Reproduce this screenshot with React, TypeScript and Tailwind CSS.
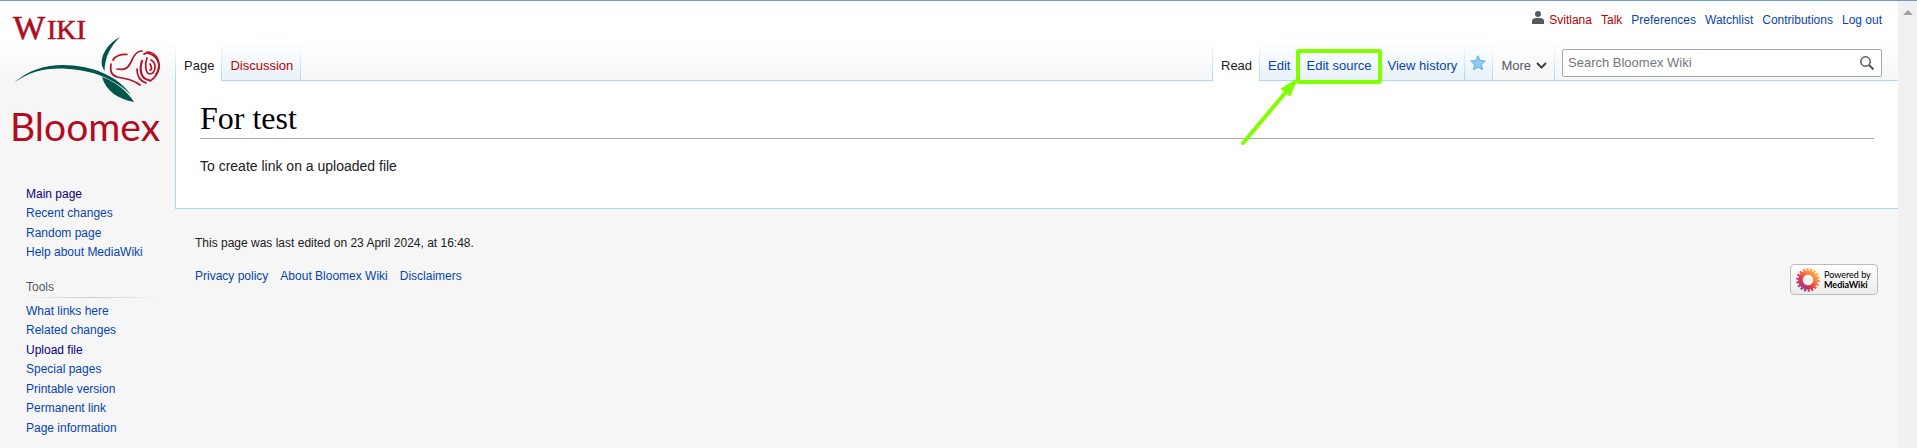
import React from 'react';

interface LinkItem {
  label: string;
  tone?: 'link' | 'new' | 'visited';
}

const toneClass = {
  link: 'text-[#0645ad]',
  new: 'text-[#ba0000]',
  visited: 'text-[#0b0080]',
};

const personalLinks: LinkItem[] = [
  { label: 'Svitlana', tone: 'new' },
  { label: 'Talk', tone: 'new' },
  { label: 'Preferences' },
  { label: 'Watchlist' },
  { label: 'Contributions' },
  { label: 'Log out' },
];

const mainLinks: LinkItem[] = [
  { label: 'Main page', tone: 'visited' },
  { label: 'Recent changes' },
  { label: 'Random page' },
  { label: 'Help about MediaWiki' },
];

const toolLinks: LinkItem[] = [
  { label: 'What links here' },
  { label: 'Related changes' },
  { label: 'Upload file', tone: 'visited' },
  { label: 'Special pages' },
  { label: 'Printable version' },
  { label: 'Permanent link' },
  { label: 'Page information' },
];

const footerLinks: LinkItem[] = [
  { label: 'Privacy policy' },
  { label: 'About Bloomex Wiki' },
  { label: 'Disclaimers' },
];

const WikiLink: React.FC<LinkItem> = ({ label, tone = 'link' }) => (
  <a href="#" className={`${toneClass[tone]} hover:underline`}>{label}</a>
);

const Logo: React.FC = () => (
  <svg viewBox="0 0 175 159" className="block w-full" role="img" aria-label="Bloomex Wiki">
    <g fill="#b00d1e">
      <text y="38" fontFamily="Liberation Serif, serif" stroke="#b00d1e" strokeWidth="0.6">
        <tspan x="13" fontSize="34">W</tspan>
        <tspan x="47" fontSize="28">IKI</tspan>
      </text>
      <text x="10" y="140" fontSize="39" fontFamily="Lato, sans-serif">Bloomex</text>
    </g>
    <g fill="#00564b">
      <path d="M14 82C28 69 45 64 63 64C92 64 118 75 131 94C116 79 95 69 63 67.500C45 67 28 71 14 82Z" />
      <path d="M120 36C107 43 100 55 102 65L104.500 70C105 56 110 46 120 36Z" />
      <path d="M102 76C106 90 118 98 134 101C128 91 115 80 102 76Z" />
    </g>
    <g fill="none" stroke="#b51125" strokeWidth="1.700" strokeLinecap="round">
      <path d="M113 59C115 55 121 53 127 53.500" />
      <path d="M111 63C110 70 111 74 117 76C127 78 134 79 140 84" />
      <path d="M117 68C127 70 129 65 132 59C135 52 138 50 142 50" />
      <path d="M144 53C149 50 151 54 154 55C160 60 160 68 156 73" />
      <path d="M147 51C154 51 160 57 159 67C158 72 155 77 150 80" />
      <path d="M142 60C139 69 141 78 149 79" strokeWidth="2.200" />
      <path d="M137 68C137 75 140 80 146 82" />
      <path d="M147 57C144 64 146 73 150 73C156 72 157 62 151 59" />
      <path d="M150 63C152 66 152 69 150 69" />
    </g>
  </svg>
);

const PoweredBy: React.FC = () => (
  <a
    href="#"
    className="flex h-[31px] w-[88px] items-center gap-1 rounded-[4px] border border-[#bcbcbc] bg-linear-to-b from-white to-[#ececec] pl-[5px] text-black"
  >
    <svg viewBox="-12 -12 24 24" className="size-6 shrink-0" aria-hidden="true">
      <defs>
        <linearGradient id="petals" gradientUnits="userSpaceOnUse" x1="-8" y1="9" x2="8" y2="-9">
          <stop offset="0" stopColor="#8a3f91" />
          <stop offset="0.350" stopColor="#e3344e" />
          <stop offset="0.650" stopColor="#fb7a3c" />
          <stop offset="1" stopColor="#ffc04a" />
        </linearGradient>
      </defs>
      <circle r="7.500" fill="none" stroke="url(#petals)" strokeWidth="4.500" />
      <circle r="10.500" fill="none" stroke="url(#petals)" strokeWidth="2.600" strokeDasharray="2.100 1.566" />
    </svg>
    <span className="flex flex-col font-['Lato',sans-serif] text-[9px] leading-[10px]">
      <span>Powered by</span>
      <span className="font-bold">MediaWiki</span>
    </span>
  </a>
);

const Separator: React.FC = () => (
  <span className="w-px shrink-0 bg-linear-to-b from-white to-[#a7d7f9]" />
);

interface TabProps {
  label: string;
  selected?: boolean;
  isNew?: boolean;
  children?: React.ReactNode;
}

const Tab: React.FC<TabProps> = ({ label, selected, isNew, children }) => {
  const surface = selected
    ? 'bg-white border-white text-[#202122]'
    : 'bg-linear-to-b from-white to-[#e8f2f8] border-[#a7d7f9]';
  const color = selected ? '' : isNew ? 'text-[#ba0000]' : 'text-[#0645ad]';

  return (
    <>
      <div className={`relative border-b pt-[15px] pr-[7px] pl-2 ${surface}`}>
        <a href="#" className={`whitespace-nowrap ${color}`}>{label}</a>
        {children}
      </div>
      <Separator />
    </>
  );
};

const Highlight: React.FC = () => (
  <svg
    viewBox="0 0 144 100"
    className="pointer-events-none absolute top-[7px] -left-[58px] z-10 h-[100px] w-[144px] max-w-none"
    fill="none"
    stroke="#80ff00"
    aria-hidden="true"
  >
    <rect x="58" y="3" width="82" height="31" rx="1" strokeWidth="4" />
    <path d="M3 95L46 44" strokeWidth="4" strokeLinecap="round" />
    <path d="M57 31L41 41L50 48Z" fill="#80ff00" strokeWidth="1" />
  </svg>
);

const SearchBox: React.FC = () => (
  <form className="mt-2 mr-4 ml-[7px] flex h-7 w-80 rounded-[2px] border border-[#a2a9b1] bg-white" role="search">
    <input
      type="search"
      aria-label="Search Bloomex Wiki"
      placeholder="Search Bloomex Wiki"
      className="min-w-0 flex-1 bg-transparent px-[5px] text-[13px] outline-none placeholder:text-[#72777d]"
    />
    <button type="submit" aria-label="Search" className="flex w-7 items-center justify-center">
      <svg viewBox="0 0 14 14" className="size-[14px]" fill="none" stroke="#54595d" aria-hidden="true">
        <circle cx="5.500" cy="5.500" r="4.700" strokeWidth="1.500" />
        <path d="M9 9L13.500 13.500" strokeWidth="2" />
      </svg>
    </button>
  </form>
);

const Header: React.FC = () => (
  <header>
    <nav aria-label="Personal tools" className="flex h-10 items-start justify-end pt-[10px] pr-4">
      <svg viewBox="0 0 12 13" className="mr-[5px] h-[13px] w-3" fill="#54595d" aria-hidden="true">
        <circle cx="6" cy="3" r="3" />
        <path d="M0 13V10C0 8 2 7 4 7H8C10 7 12 8 12 10V13Z" />
      </svg>
      <ul className="flex gap-[9px] text-xs leading-[18px]">
        {personalLinks.map((item) => (
          <li key={item.label}><WikiLink {...item} /></li>
        ))}
      </ul>
    </nav>

    <div className="flex h-10 text-[13px] leading-5">
      <Separator />
      <Tab label="Page" selected />
      <Tab label="Discussion" isNew />
      <div className="flex-1 border-b border-[#a7d7f9]" />
      <Separator />
      <Tab label="Read" selected />
      <Tab label="Edit" />
      <Tab label="Edit source">
        <Highlight />
      </Tab>
      <Tab label="View history" />
      <button
        type="button"
        aria-label="Watch this page"
        className="flex w-[27px] border-b border-[#a7d7f9] bg-linear-to-b from-white to-[#e8f2f8] pt-[14px] pl-[5px]"
      >
        <svg viewBox="0 0 16 16" className="size-4" aria-hidden="true">
          <path
            d="M8 0.700L10.100 5.500L15.300 6L11.400 9.500L12.600 14.800L8 12.100L3.400 14.800L4.600 9.500L0.700 6L5.900 5.500Z"
            fill="#8ccaf7"
            stroke="#63aee8"
            strokeWidth="1"
          />
        </svg>
      </button>
      <Separator />
      <button type="button" className="flex gap-[5px] border-b border-[#a7d7f9] pt-[15px] pr-[7px] pl-2 text-[#54595d]">
        More
        <svg viewBox="0 0 11 7" className="mt-[6px] h-[7px] w-[11px]" fill="none" stroke="#404244" strokeWidth="2" aria-hidden="true">
          <path d="M1 1L5.500 5.500L10 1" />
        </svg>
      </button>
      <Separator />
      <div className="border-b border-[#a7d7f9]">
        <SearchBox />
      </div>
    </div>
  </header>
);

const Sidebar: React.FC = () => (
  <aside className="w-[175px] shrink-0 text-xs leading-5">
    <a href="#" className="block"><Logo /></a>
    <nav aria-label="Navigation" className="mt-6 pl-[26px]">
      <ul>
        {mainLinks.map((item) => (
          <li key={item.label} className="even:leading-[19px]"><WikiLink {...item} /></li>
        ))}
      </ul>
    </nav>
    <nav aria-label="Tools" className="mt-[15px] pl-[22px]">
      <h3 className="pl-1 text-[#54595d]">Tools</h3>
      <div className="mr-4 h-px bg-linear-to-r from-transparent via-[#c8ccd1] to-transparent" />
      <ul className="mt-[3px] pl-1">
        {toolLinks.map((item) => (
          <li key={item.label} className="even:leading-[19px]"><WikiLink {...item} /></li>
        ))}
      </ul>
    </nav>
  </aside>
);

const App: React.FC = () => {
  return (
    <div className="flex min-h-screen border-t border-[#6b9bd1] bg-[#f6f6f6] font-['Liberation_Sans',Arial,sans-serif]">
      <div className="flex min-w-0 flex-1 bg-[linear-gradient(#fff_40px,#f6f6f6_80px)]">
        <Sidebar />
        <div className="min-w-0 flex-1">
          <Header />
          <main className="border-b border-l border-[#a7d7f9] bg-white px-6 pt-[21px] pb-8 text-[#202122]">
            <h1 className="border-b border-[#a2a9b1] pb-1 font-['Liberation_Serif',serif] text-[32px] leading-8 text-black">
              For test
            </h1>
            <p className="mt-[17px] text-sm leading-5">To create link on a uploaded file</p>
          </main>
          <footer className="px-5 pt-6 text-xs text-[#202122]">
            <p className="leading-5">This page was last edited on 23 April 2024, at 16:48.</p>
            <div className="mt-[11px] flex items-start justify-between">
              <ul className="flex gap-3 leading-6">
                {footerLinks.map((item) => (
                  <li key={item.label}><WikiLink {...item} /></li>
                ))}
              </ul>
              <PoweredBy />
            </div>
          </footer>
        </div>
      </div>
      <div className="flex w-[19px] shrink-0 justify-center bg-[#f0f0f0] pt-[9px]" aria-hidden="true">
        <svg viewBox="0 0 10 5" className="h-[5px] w-[10px]" fill="#a3a3a3">
          <path d="M5 0L10 5H0Z" />
        </svg>
      </div>
    </div>
  );
};

export default App;
